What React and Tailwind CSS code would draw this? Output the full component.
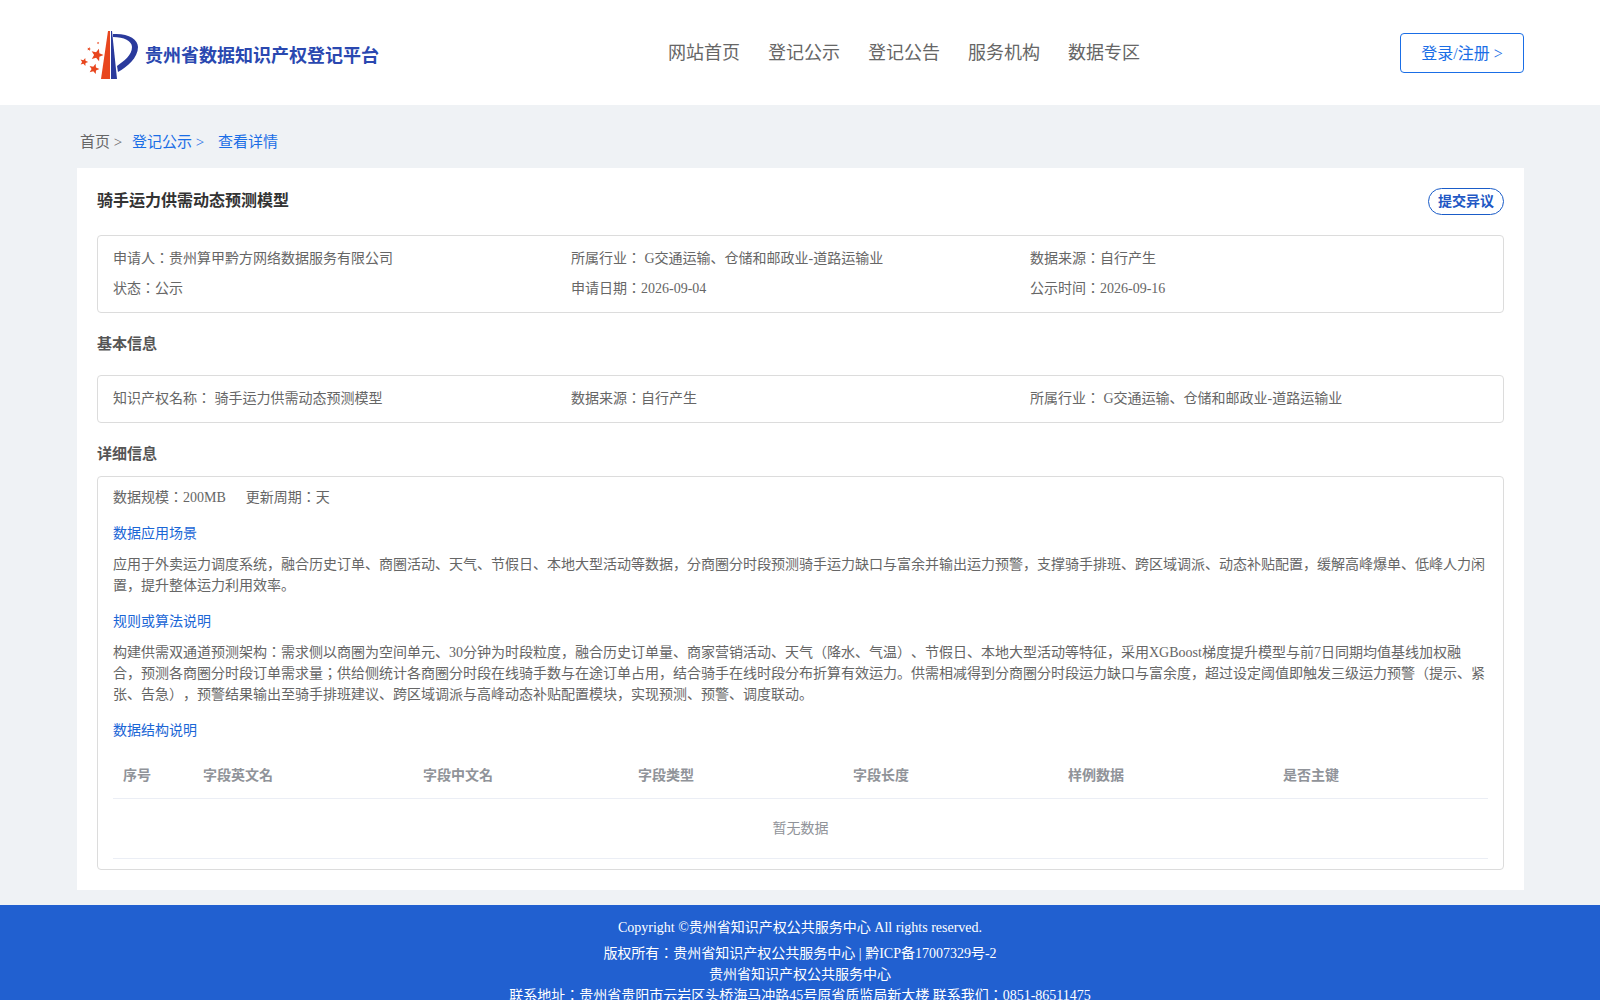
import React from 'react';

const NAV_ITEMS = ['网站首页', '登记公示', '登记公告', '服务机构', '数据专区'];
const COLUMNS = [
    { label: '序号', width: 'w-[80px]' },
    { label: '字段英文名', width: 'w-[220px]' },
    { label: '字段中文名', width: 'w-[215px]' },
    { label: '字段类型', width: 'w-[215px]' },
    { label: '字段长度', width: 'w-[215px]' },
    { label: '样例数据', width: 'w-[215px]' },
    { label: '是否主键', width: 'flex-1' },
];

// ── Logo ──────────────────────────────────────────────────────────────────────
function Star({ x, y, r }) {
    const pts = [];
    for (let i = 0; i < 10; i++) {
        const a = (Math.PI / 5) * i - Math.PI / 2 + 0.3;
        const d = i % 2 === 0 ? r : r * 0.45;
        pts.push(`${(x + d * Math.cos(a)).toFixed(2)},${(y + d * Math.sin(a)).toFixed(2)}`);
    }
    return <polygon points={pts.join(' ')} fill="#e8461e" />;
}

function Logo() {
    return (
        <svg width="60" height="50" viewBox="0 0 60 50" className="shrink-0">
            <Star x={18} y={25} r={6.5} />
            <Star x={5} y={32} r={4.2} />
            <Star x={15} y={39} r={5.4} />
            <Star x={10} y={19} r={2} />
            <Star x={19} y={13} r={1.4} />
            <path d="M22 49 L29 1 L31 1 L31 49 Z" fill="#e8461e" />
            <path d="M32 1 L33 1 L38 49 L32 49 Z" fill="#2a3a9c" />
            <path d="M34 4 C49 3 59 9 59 17 C59 28 48 37 39 42 L38 36 C45 31 53 25 53 17 C53 11 45 7 34 7 Z" fill="#2a3a9c" />
        </svg>
    );
}

// ── Bordered info box ─────────────────────────────────────────────────────────
function InfoRow({ items }) {
    return (
        <div className="grid grid-cols-[458px_459px_1fr]">
            {items.map((text) => (
                <div key={text}>{text}</div>
            ))}
        </div>
    );
}

function SectionLink({ children, className }) {
    return <div className={`text-[#1a66d6] text-[14px] leading-[21px] ${className}`}>{children}</div>;
}

export default function App() {
    return (
        <div className="h-[1000px] overflow-hidden bg-[#eff2f5] text-[14px] [text-spacing-trim:space-all] font-['Liberation_Serif','Noto_Sans_CJK_JP',serif]">
            {/* Header */}
            <header className="h-[105px] bg-white flex px-[76px]">
                <div className="w-[500px] flex items-center gap-[6px] pl-[3px] pt-[4px]">
                    <Logo />
                    <span className="text-[18px] font-bold text-[#2a48b0] pt-[4px]">贵州省数据知识产权登记平台</span>
                </div>
                <nav className="flex gap-[28px] pl-[92px] pt-[40px] text-[18px] leading-[27px] text-[#666666]">
                    {NAV_ITEMS.map((item) => (
                        <span key={item}>{item}</span>
                    ))}
                </nav>
                <div className="flex-1 flex justify-end pt-[33px]">
                    <button className="w-[124px] h-[40px] pt-[2px] border border-[#1a6ee6] rounded-[4px] text-[16px] text-[#1a6ee6]">登录/注册 &gt;</button>
                </div>
            </header>

            {/* Breadcrumb */}
            <div className="h-[63px] px-[80px] pt-[25px] text-[15px] leading-[24px] flex">
                <span className="text-[#666666] w-[52px]">首页 &gt;</span>
                <span className="text-[#1a6ee6] w-[86px]">登记公示 &gt;</span>
                <span className="text-[#1a6ee6]">查看详情</span>
            </div>

            {/* Card */}
            <main className="ml-[77px] mr-[76px] bg-white h-[722px] px-[20px] pt-[20px] text-[#666666]">
                <div className="flex justify-between h-[47px]">
                    <h1 className="text-[16px] leading-[25px] font-bold text-[#333333]">骑手运力供需动态预测模型</h1>
                    <button className="w-[76px] h-[27px] border border-[#1a5cc8] rounded-[14px] text-[14px] font-bold text-[#2157c4]">提交异议</button>
                </div>

                <div className="border border-[#dcdcdc] rounded-[4px] h-[78px] px-[15px] pt-[8px] leading-[30px]">
                    <InfoRow items={['申请人：贵州算甲黔方网络数据服务有限公司', '所属行业： G交通运输、仓储和邮政业-道路运输业', '数据来源：自行产生']} />
                    <InfoRow items={['状态：公示', '申请日期：2026-09-04', '公示时间：2026-09-16']} />
                </div>

                <h2 className="mt-[21px] h-[41px] text-[15px] font-bold text-[#555555] leading-[21px]">基本信息</h2>

                <div className="border border-[#dcdcdc] rounded-[4px] h-[48px] px-[15px] pt-[8px] leading-[30px]">
                    <InfoRow items={['知识产权名称： 骑手运力供需动态预测模型', '数据来源：自行产生', '所属行业： G交通运输、仓储和邮政业-道路运输业']} />
                </div>

                <h2 className="mt-[21px] h-[32px] text-[15px] font-bold text-[#555555] leading-[21px]">详细信息</h2>

                <div className="border border-[#dcdcdc] rounded-[4px] h-[394px] px-[15px] pt-[10px] leading-[21px]">
                    <div className="flex gap-[20px]">
                        <span>数据规模：200MB</span>
                        <span>更新周期：天</span>
                    </div>
                    <SectionLink className="mt-[15px]">数据应用场景</SectionLink>
                    <p className="mt-[10px]">应用于外卖运力调度系统，融合历史订单、商圈活动、天气、节假日、本地大型活动等数据，分商圈分时段预测骑手运力缺口与富余并输出运力预警，支撑骑手排班、跨区域调派、动态补贴配置，缓解高峰爆单、低峰人力闲置，提升整体运力利用效率。</p>
                    <SectionLink className="mt-[15px]">规则或算法说明</SectionLink>
                    <p className="mt-[10px]">构建供需双通道预测架构：需求侧以商圈为空间单元、30分钟为时段粒度，融合历史订单量、商家营销活动、天气（降水、气温）、节假日、本地大型活动等特征，采用XGBoost梯度提升模型与前7日同期均值基线加权融合，预测各商圈分时段订单需求量；供给侧统计各商圈分时段在线骑手数与在途订单占用，结合骑手在线时段分布折算有效运力。供需相减得到分商圈分时段运力缺口与富余度，超过设定阈值即触发三级运力预警（提示、紧张、告急），预警结果输出至骑手排班建议、跨区域调派与高峰动态补贴配置模块，实现预测、预警、调度联动。</p>
                    <SectionLink className="mt-[15px]">数据结构说明</SectionLink>

                    {/* Table */}
                    <div className="mt-[11px] h-[47px] flex items-center pl-[10px] border-b border-[#ebeef5] font-bold text-[#909399]">
                        {COLUMNS.map((col) => (
                            <div key={col.label} className={col.width}>{col.label}</div>
                        ))}
                    </div>
                    <div className="h-[60px] flex items-center justify-center border-b border-[#ebeef5] text-[#909399]">暂无数据</div>
                </div>
            </main>

            {/* Footer */}
            <footer className="mt-[15px] bg-[#2160d0] text-white text-center pt-[12px] leading-[21px]">
                <div className="mb-[5px]">Copyright ©贵州省知识产权公共服务中心 All rights reserved.</div>
                <div>版权所有：贵州省知识产权公共服务中心 | 黔ICP备17007329号-2</div>
                <div>贵州省知识产权公共服务中心</div>
                <div>联系地址：贵州省贵阳市云岩区头桥海马冲路45号原省质监局新大楼 联系我们：0851-86511475</div>
            </footer>
        </div>
    );
}
